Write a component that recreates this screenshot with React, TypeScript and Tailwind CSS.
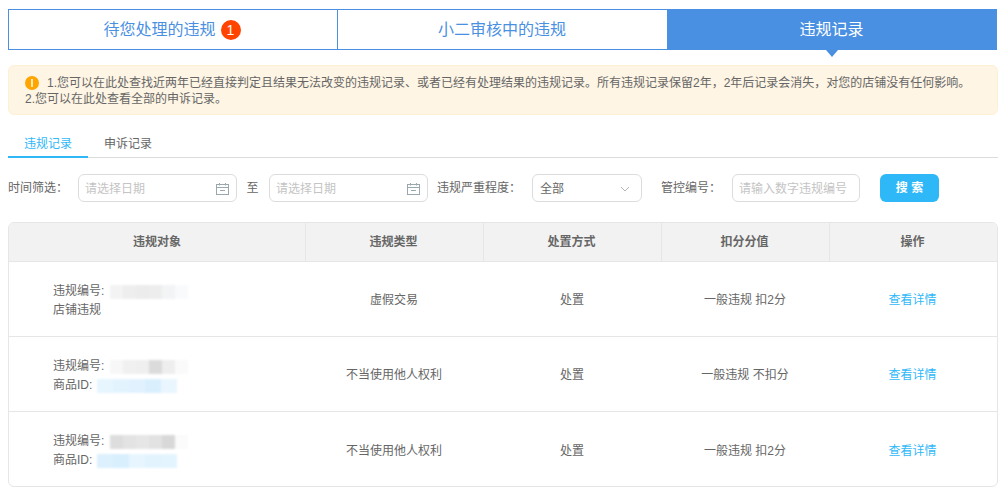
const rows = [
  {
    second: "店铺违规",
    type: "虚假交易",
    score: "一般违规 扣2分",
    grays: ["bg-[#f3f3f3]", "bg-[#eeeeee]", "bg-[#ececec]", "bg-[#ededed]", "bg-[#f3f4f5]", "bg-[#f9fafb]"],
    blues: [],
  },
  {
    second: "商品ID:",
    type: "不当使用他人权利",
    score: "一般违规 不扣分",
    grays: ["bg-[#f7f7f7]", "bg-[#f0f0f0]", "bg-[#efefef]", "bg-[#dcdbdb]", "bg-[#eeeeee]", "bg-[#fafafa]"],
    blues: ["bg-[#e6f5fe]", "bg-[#e3f3fe]", "bg-[#e1f2fe]", "bg-[#d9effe]", "bg-[#e9f6fe]"],
  },
  {
    second: "商品ID:",
    type: "不当使用他人权利",
    score: "一般违规 扣2分",
    grays: ["bg-[#dddddd]", "bg-[#e3e3e3]", "bg-[#e6e6e6]", "bg-[#e3e2e2]", "bg-[#d8d8d8]", "bg-[#fbfbfb]"],
    blues: ["bg-[#dcf0fd]", "bg-[#d8effe]", "bg-[#e6f5fe]", "bg-[#e3f3fe]", "bg-[#e3f4fe]"],
  },
];

function Blur({ colors, wide }: { colors: string[]; wide?: boolean }) {
  return (
    <span className="flex h-[14px] blur-[1px]">
      {colors.map((c, i) => (
        <span key={i} className={`h-full ${wide ? "w-4" : "w-[13px]"} ${c}`} />
      ))}
    </span>
  );
}

function CalendarIcon() {
  return (
    <svg width="13" height="12" viewBox="0 0 13 12" fill="none" stroke="#9aa7ae" strokeWidth="1">
      <rect x="0.5" y="1.5" width="12" height="10" />
      <path d="M0.5 4.5h12M3.5 0v2.5M9.5 0v2.5M4 7.5h5" />
    </svg>
  );
}

function DateInput() {
  return (
    <div className="w-[159px] h-7 border border-[#dcdcdc] rounded-md flex items-center justify-between pl-[6px] pr-[7px] pt-px text-xs text-[#c4c4c4]">
      <span>请选择日期</span>
      <CalendarIcon />
    </div>
  );
}

export default function App() {
  return (
    <div
      className="w-[1002px] h-[496px] overflow-hidden bg-white pl-2 pr-1 pt-[9px] text-xs text-[#666]"
      style={{ fontFamily: '"Liberation Sans", "Noto Sans CJK SC", sans-serif' }}
    >
      {/* top tabs */}
      <div className="flex w-[989px] h-[41px] border border-[#4a90e2] text-base text-[#4a90e2]">
        <div className="w-[329px] pr-[2px] border-r border-[#4a90e2] flex items-center justify-center gap-[5px]">
          待您处理的违规
          <span className="w-5 h-5 rounded-full bg-[#ff4400] text-white text-sm flex items-center justify-center">1</span>
        </div>
        <div className="w-[330px] pr-[2px] flex items-center justify-center">小二审核中的违规</div>
        <div className="relative flex-1 -m-px pr-px bg-[#4a90e2] text-white flex items-center justify-center">
          违规记录
          <span className="absolute top-full left-1/2 -translate-x-1/2 border-x-[6px] border-t-[7px] border-x-transparent border-t-[#4a90e2]" />
        </div>
      </div>

      {/* notice */}
      <div className="mt-[15px] w-[990px] h-[50px] rounded-md border border-[#fdf0d5] bg-[#fef5e4] pl-4 pt-[9px] leading-4 text-[#666]">
        <div className="flex items-center">
          <span className="w-[14px] h-[14px] rounded-full bg-[#ffa500] flex items-center justify-center mr-2">
            <span className="w-[2px] h-2 bg-[#ffe9b8]" />
          </span>
          1.您可以在此处查找近两年已经直接判定且结果无法改变的违规记录、或者已经有处理结果的违规记录。所有违规记录保留2年，2年后记录会消失，对您的店铺没有任何影响。
        </div>
        <div>2.您可以在此处查看全部的申诉记录。</div>
      </div>

      {/* sub tabs */}
      <div className="mt-[19px] w-[990px] h-[24px] flex border-b border-[#dcdcdc]">
        <div className="w-20 h-[24px] border-b-2 border-[#2fb8f8] text-[#2fb8f8] text-center leading-5">违规记录</div>
        <div className="w-20 text-center leading-5 text-[#666]">申诉记录</div>
      </div>

      {/* filters */}
      <div className="mt-[16px] flex items-center h-7">
        <span className="w-[70px]">时间筛选：</span>
        <DateInput />
        <span className="w-8 pr-px text-center">至</span>
        <DateInput />
        <span className="ml-[9px] w-[95px]">违规严重程度：</span>
        <div className="w-[110px] h-7 border border-[#dcdcdc] rounded-md flex items-center justify-between pl-[7px] pr-[11px] pt-px">
          全部
          <svg width="10" height="6" viewBox="0 0 10 6" fill="none" stroke="#b5b5b5">
            <path d="M1 1l4 4 4-4" />
          </svg>
        </div>
        <span className="ml-[19px] w-[71px]">管控编号：</span>
        <div className="w-[128px] h-7 border border-[#dcdcdc] rounded-md flex items-center pl-[6px] pt-px text-[#c4c4c4]">
          请输入数字违规编号
        </div>
        <button className="ml-5 w-[59px] h-7 rounded-md bg-[#2fb8f8] text-white font-bold">搜 索</button>
      </div>

      {/* table */}
      <div className="mt-5 w-[990px] h-[265px] border border-[#e6e6e6] rounded-md overflow-hidden">
        <div className="grid grid-cols-[297px_178px_178px_168px_1fr] h-[39px] bg-[#f2f2f2] border-b border-[#e6e6e6] font-bold text-center">
          {["违规对象", "违规类型", "处置方式", "扣分分值", "操作"].map((h, i) => (
            <div
              key={h}
              className={`flex items-center justify-center ${i > 0 ? "pr-[2px]" : ""} ${i < 4 ? "border-r border-[#e6e6e6]" : ""}`}
            >
              {h}
            </div>
          ))}
        </div>
        {rows.map((r, i) => (
          <div
            key={i}
            className={`grid grid-cols-[297px_178px_178px_168px_1fr] h-[75px] items-center pt-[2px] text-center ${i < 2 ? "border-b border-[#e6e6e6]" : ""}`}
          >
            <div className={`pl-[44px] text-left leading-[19px] ${i < 2 ? "mt-[2px]" : "mt-px"}`}>
              <div className="flex items-center">
                违规编号:
                <span className="ml-[6px]">
                  <Blur colors={r.grays} />
                </span>
              </div>
              <div className="flex items-center">
                {r.second}
                {r.blues.length > 0 && (
                  <span className="ml-[5px]">
                    <Blur colors={r.blues} wide />
                  </span>
                )}
              </div>
            </div>
            <div className="pr-[2px]">{r.type}</div>
            <div className="pr-[2px]">处置</div>
            <div className="pr-[2px]">{r.score}</div>
            <div className="pr-[2px] text-[#2fb8f8]">查看详情</div>
          </div>
        ))}
      </div>
    </div>
  );
}
